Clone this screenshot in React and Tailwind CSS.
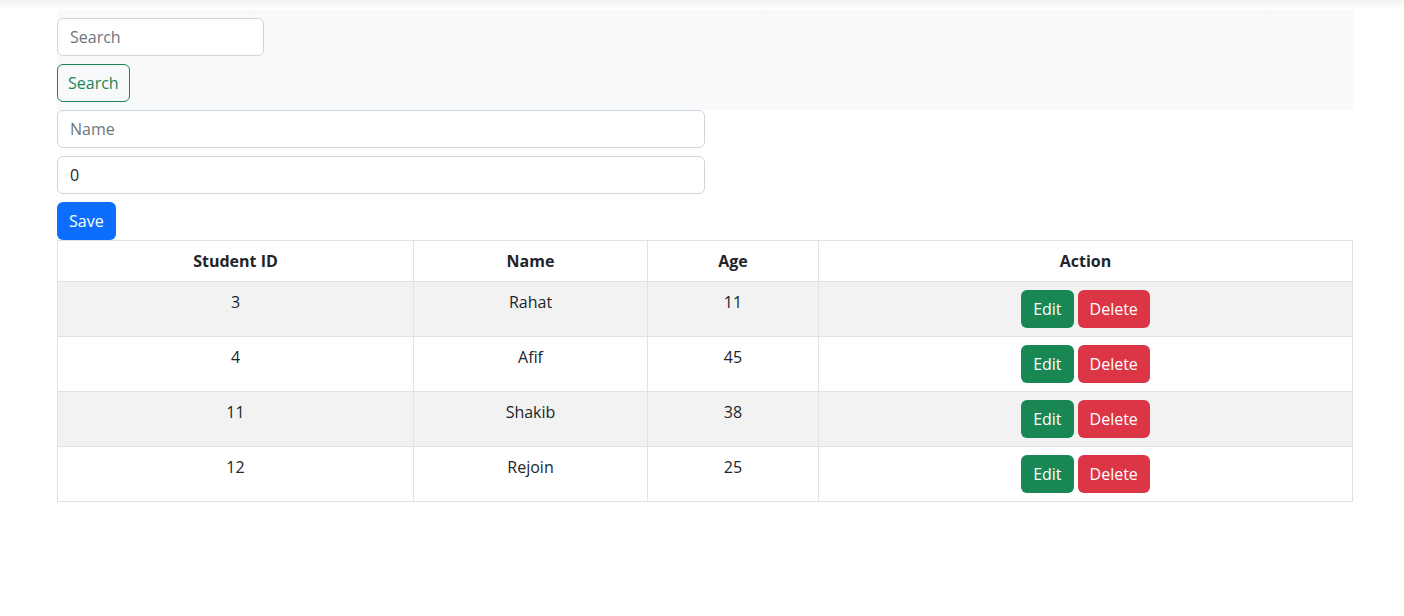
import React from 'react';

const students = [
    { id: 3, name: 'Rahat', age: 11 },
    { id: 4, name: 'Afif', age: 45 },
    { id: 11, name: 'Shakib', age: 38 },
    { id: 12, name: 'Rejoin', age: 25 },
];

const inputCls = 'h-[38px] px-3 rounded-md border border-[#ced4da] bg-white text-[16px] text-[#212529] placeholder:text-[#6c757d] outline-none';

export default function App() {
    return (
        <div className="min-h-screen bg-white text-[#212529] text-[16px] font-['Open_Sans',sans-serif]">
            <div className="h-[10px] bg-gradient-to-b from-[#f2f2f2] to-white"></div>
            <div className="ml-[57px] w-[1296px]">
                {/* search bar */}
                <div className="bg-[#f8f9fa] py-2 flex flex-col gap-2 items-start">
                    <input className={`${inputCls} w-[207px]`} placeholder="Search" />
                    <button className="h-[38px] px-[10px] rounded-md border border-[#198754] text-[#198754] leading-none">
                        Search
                    </button>
                </div>

                {/* form */}
                <div className="flex flex-col gap-2 items-start">
                    <input className={`${inputCls} w-[648px]`} placeholder="Name" />
                    <input className={`${inputCls} w-[648px]`} defaultValue="0" />
                    <button className="h-[38px] px-3 rounded-md bg-[#0d6efd] text-white leading-none">
                        Save
                    </button>
                </div>

                {/* table */}
                <table className="w-full border-collapse border border-[#dee2e6] text-center">
                    <thead>
                        <tr className="h-[41px]">
                            <th className="w-[356px] border border-[#dee2e6] font-bold px-2">Student ID</th>
                            <th className="w-[234px] border border-[#dee2e6] font-bold px-2">Name</th>
                            <th className="w-[171px] border border-[#dee2e6] font-bold px-2">Age</th>
                            <th className="border border-[#dee2e6] font-bold px-2">Action</th>
                        </tr>
                    </thead>
                    <tbody>
                        {students.map((s, i) => (
                            <tr key={s.id} className={i % 2 === 0 ? 'bg-[#f2f2f2]' : 'bg-white'}>
                                <td className="border border-[#dee2e6] p-2 align-top leading-6">{s.id}</td>
                                <td className="border border-[#dee2e6] p-2 align-top leading-6">{s.name}</td>
                                <td className="border border-[#dee2e6] p-2 align-top leading-6">{s.age}</td>
                                <td className="border border-[#dee2e6] p-2 align-top">
                                    <div className="flex justify-center gap-1">
                                        <button className="h-[38px] px-3 rounded-md bg-[#198754] text-white leading-none">Edit</button>
                                        <button className="h-[38px] px-3 rounded-md bg-[#dc3545] text-white leading-none">Delete</button>
                                    </div>
                                </td>
                            </tr>
                        ))}
                    </tbody>
                </table>
            </div>
        </div>
    );
}
